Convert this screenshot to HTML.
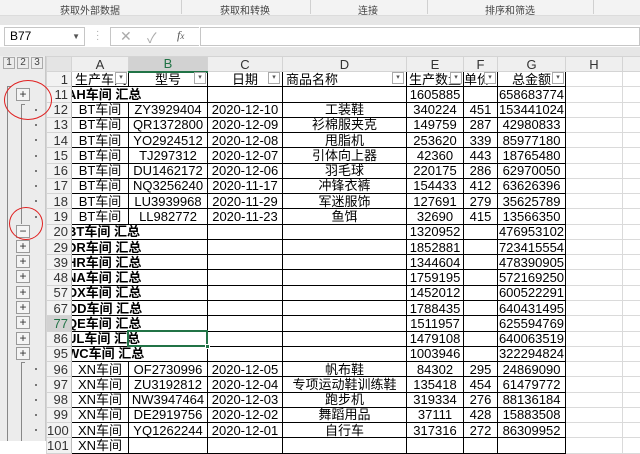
<!DOCTYPE html>
<html><head><meta charset="utf-8"><style>
*{margin:0;padding:0;box-sizing:border-box}
body{width:640px;height:441px;overflow:hidden;background:#fff;font-family:"Liberation Sans","Noto Sans CJK SC",sans-serif;font-size:13px;color:#000;position:relative}
.abs{position:absolute}
.rib{left:0;top:0;width:640px;height:16px;background:#f3f3f3;border-bottom:1px solid #dcdcdc;font-size:10px;color:#444}
.rib span{position:absolute;top:2px;transform:translateX(-50%)}
.sep{position:absolute;top:0;width:1px;height:14px;background:#d0d0d0}
.bar{left:0;top:16px;width:640px;height:9px;background:#e6e6e6}
.fbar{left:0;top:25px;width:640px;height:23px;background:#fff}
.bar2{left:0;top:47px;width:640px;height:9px;background:#e6e6e6}
.gut{left:0;top:56px;width:46px;height:385px;background:#ececec;border-right:1px solid #c8c8c8}
table{position:absolute;left:46px;top:56px;width:636px;border-collapse:collapse;table-layout:fixed}
td{height:15.27px;padding:0;line-height:13px;text-align:center;white-space:nowrap;overflow:hidden;border:1px solid #000}
tr.h td{height:15px;background:#efefef;border:1px solid #d4d4d4;color:#333;font-size:13px}
td.rh{background:#f2f2f2;border:1px solid #d4d4d4;border-right:1px solid #bbb;text-align:right;padding-right:3px;color:#333}
td.g{border:1px solid #dadada}
td.s{text-align:left;font-weight:bold;text-indent:-5px;border-right:none}
.flt{position:absolute;width:12px;height:12px;border:1px solid #aaa;background:#fff;font-size:7px;line-height:10px;text-align:center;color:#555}
.btn{position:absolute;left:16px;width:14px;height:13px;border:1px solid #999;background:#f4f4f4;font-size:12px;line-height:11px;text-align:center;color:#333}
.dot{position:absolute;left:35px;width:2px;height:2px;background:#777}
</style></head><body>
<div class="abs rib"><span style="left:90px">获取外部数据</span><div class="sep" style="left:181px"></div><span style="left:245px">获取和转换</span><div class="sep" style="left:310px"></div><span style="left:368px">连接</span><div class="sep" style="left:427px"></div><span style="left:510px">排序和筛选</span><div class="sep" style="left:593px"></div></div>
<div class="abs bar"></div>
<div class="abs fbar"></div>
<div class="abs" style="left:4px;top:27px;width:81px;height:19px;border:1px solid #c6c6c6;background:#fff;font-size:12px;line-height:17px;padding-left:5px">B77<span style="position:absolute;right:4px;top:0;font-size:8px;color:#555">▼</span></div>
<div class="abs" style="left:96px;top:30px;color:#aaa;font-size:10px;line-height:4px">·<br>·<br>·</div>
<div class="abs" style="left:110px;top:27px;width:89px;height:19px;border:1px solid #c6c6c6;border-right:none;background:#fff"></div>
<div class="abs" style="left:120px;top:28px;color:#aaa;font-size:14px">✕</div>
<div class="abs" style="left:147px;top:28px;color:#aaa;font-size:14px">✓</div>
<div class="abs" style="left:177px;top:28px;color:#555;font-size:12px;font-style:italic;font-family:'Liberation Serif',serif">f<span style="font-size:9px">x</span></div>
<div class="abs" style="left:200px;top:27px;width:440px;height:19px;border:1px solid #c6c6c6;background:#fff"></div>
<div class="abs bar2"></div>
<div class="abs gut"></div>
<div class="abs" style="left:3px;top:57px;width:12px;height:12px;border:1px solid #aaa;font-size:10px;line-height:10px;text-align:center;color:#444">1</div>
<div class="abs" style="left:17px;top:57px;width:12px;height:12px;border:1px solid #aaa;font-size:10px;line-height:10px;text-align:center;color:#444">2</div>
<div class="abs" style="left:31px;top:57px;width:12px;height:12px;border:1px solid #aaa;font-size:10px;line-height:10px;text-align:center;color:#444">3</div>
<table>
<colgroup><col style="width:25px"><col style="width:57px"><col style="width:79px"><col style="width:75px"><col style="width:124px"><col style="width:57px"><col style="width:34px"><col style="width:68px"><col style="width:57px"><col style="width:60px"></colgroup>
<tr class="h"><td style="background:#e4e4e4"></td><td>A</td><td style="background:#d2d2d2;color:#217346;border-bottom:2px solid #217346">B</td><td>C</td><td>D</td><td>E</td><td>F</td><td>G</td><td>H</td><td></td></tr>
<tr><td class="rh">1</td><td style="text-align:left;padding-left:3px">生产车间</td><td>型号</td><td>日期</td><td style="text-align:left;padding-left:3px">商品名称</td><td style="text-align:left;padding-left:2px">生产数量</td><td style="text-align:left">单价</td><td>总金额</td><td class="g"></td><td class="g"></td></tr>
<tr><td class="rh">11</td><td class="s" colspan="2">AH车间 汇总</td><td></td><td></td><td>1605885</td><td></td><td>658683774</td><td class="g"></td><td class="g"></td></tr>
<tr><td class="rh">12</td><td>BT车间</td><td>ZY3929404</td><td>2020-12-10</td><td>工装鞋</td><td>340224</td><td>451</td><td>153441024</td><td class="g"></td><td class="g"></td></tr>
<tr><td class="rh">13</td><td>BT车间</td><td>QR1372800</td><td>2020-12-09</td><td>衫棉服夹克</td><td>149759</td><td>287</td><td>42980833</td><td class="g"></td><td class="g"></td></tr>
<tr><td class="rh">14</td><td>BT车间</td><td>YO2924512</td><td>2020-12-08</td><td>甩脂机</td><td>253620</td><td>339</td><td>85977180</td><td class="g"></td><td class="g"></td></tr>
<tr><td class="rh">15</td><td>BT车间</td><td>TJ297312</td><td>2020-12-07</td><td>引体向上器</td><td>42360</td><td>443</td><td>18765480</td><td class="g"></td><td class="g"></td></tr>
<tr><td class="rh">16</td><td>BT车间</td><td>DU1462172</td><td>2020-12-06</td><td>羽毛球</td><td>220175</td><td>286</td><td>62970050</td><td class="g"></td><td class="g"></td></tr>
<tr><td class="rh">17</td><td>BT车间</td><td>NQ3256240</td><td>2020-11-17</td><td>冲锋衣裤</td><td>154433</td><td>412</td><td>63626396</td><td class="g"></td><td class="g"></td></tr>
<tr><td class="rh">18</td><td>BT车间</td><td>LU3939968</td><td>2020-11-29</td><td>军迷服饰</td><td>127691</td><td>279</td><td>35625789</td><td class="g"></td><td class="g"></td></tr>
<tr><td class="rh">19</td><td>BT车间</td><td>LL982772</td><td>2020-11-23</td><td>鱼饵</td><td>32690</td><td>415</td><td>13566350</td><td class="g"></td><td class="g"></td></tr>
<tr><td class="rh">20</td><td class="s" colspan="2">BT车间 汇总</td><td></td><td></td><td>1320952</td><td></td><td>476953102</td><td class="g"></td><td class="g"></td></tr>
<tr><td class="rh">29</td><td class="s" colspan="2">DR车间 汇总</td><td></td><td></td><td>1852881</td><td></td><td>723415554</td><td class="g"></td><td class="g"></td></tr>
<tr><td class="rh">39</td><td class="s" colspan="2">HR车间 汇总</td><td></td><td></td><td>1344604</td><td></td><td>478390905</td><td class="g"></td><td class="g"></td></tr>
<tr><td class="rh">48</td><td class="s" colspan="2">NA车间 汇总</td><td></td><td></td><td>1759195</td><td></td><td>572169250</td><td class="g"></td><td class="g"></td></tr>
<tr><td class="rh">57</td><td class="s" colspan="2">OX车间 汇总</td><td></td><td></td><td>1452012</td><td></td><td>600522291</td><td class="g"></td><td class="g"></td></tr>
<tr><td class="rh">67</td><td class="s" colspan="2">OD车间 汇总</td><td></td><td></td><td>1788435</td><td></td><td>640431495</td><td class="g"></td><td class="g"></td></tr>
<tr><td class="rh" style="background:#d2d2d2;color:#217346">77</td><td class="s" colspan="2">QE车间 汇总</td><td></td><td></td><td>1511957</td><td></td><td>625594769</td><td class="g"></td><td class="g"></td></tr>
<tr><td class="rh">86</td><td class="s" colspan="2">UL车间 汇总</td><td></td><td></td><td>1479108</td><td></td><td>640063519</td><td class="g"></td><td class="g"></td></tr>
<tr><td class="rh">95</td><td class="s" colspan="2">WC车间 汇总</td><td></td><td></td><td>1003946</td><td></td><td>322294824</td><td class="g"></td><td class="g"></td></tr>
<tr><td class="rh">96</td><td>XN车间</td><td>OF2730996</td><td>2020-12-05</td><td>帆布鞋</td><td>84302</td><td>295</td><td>24869090</td><td class="g"></td><td class="g"></td></tr>
<tr><td class="rh">97</td><td>XN车间</td><td>ZU3192812</td><td>2020-12-04</td><td>专项运动鞋训练鞋</td><td>135418</td><td>454</td><td>61479772</td><td class="g"></td><td class="g"></td></tr>
<tr><td class="rh">98</td><td>XN车间</td><td>NW3947464</td><td>2020-12-03</td><td>跑步机</td><td>319334</td><td>276</td><td>88136184</td><td class="g"></td><td class="g"></td></tr>
<tr><td class="rh">99</td><td>XN车间</td><td>DE2919756</td><td>2020-12-02</td><td>舞蹈用品</td><td>37111</td><td>428</td><td>15883508</td><td class="g"></td><td class="g"></td></tr>
<tr><td class="rh">100</td><td>XN车间</td><td>YQ1262244</td><td>2020-12-01</td><td>自行车</td><td>317316</td><td>272</td><td>86309952</td><td class="g"></td><td class="g"></td></tr>
<tr><td class="rh">101</td><td>XN车间</td><td></td><td></td><td></td><td></td><td></td><td></td><td class="g"></td><td class="g"></td></tr>
</table>
<div class="flt" style="left:115px;top:72px">▾</div>
<div class="flt" style="left:194px;top:72px">▾</div>
<div class="flt" style="left:268px;top:72px">▾</div>
<div class="flt" style="left:392px;top:72px">▾</div>
<div class="flt" style="left:450px;top:72px">▾</div>
<div class="flt" style="left:484px;top:72px">▾</div>
<div class="flt" style="left:552px;top:72px">▾</div>
<div class="abs" style="left:127px;top:330px;width:81px;height:17px;border:2px solid #217346"></div>
<div class="abs" style="left:205px;top:344px;width:5px;height:5px;background:#217346;border:1px solid #fff"></div>
<div class="abs" style="left:7px;top:86px;width:1px;height:355px;background:#888"></div>
<div class="abs" style="left:7px;top:86px;width:4px;height:1px;background:#888"></div>
<div class="abs" style="left:21px;top:104px;width:1px;height:120px;background:#888"></div>
<div class="abs" style="left:21px;top:104px;width:4px;height:1px;background:#888"></div>
<div class="abs" style="left:21px;top:362px;width:1px;height:79px;background:#888"></div>
<div class="abs" style="left:21px;top:362px;width:4px;height:1px;background:#888"></div>
<div class="btn" style="top:88px">+</div>
<div class="btn" style="top:225px">−</div>
<div class="btn" style="top:240px">+</div>
<div class="btn" style="top:255px">+</div>
<div class="btn" style="top:270px">+</div>
<div class="btn" style="top:286px">+</div>
<div class="btn" style="top:301px">+</div>
<div class="btn" style="top:316px">+</div>
<div class="btn" style="top:332px">+</div>
<div class="btn" style="top:347px">+</div>
<div class="dot" style="top:109px"></div><div class="dot" style="top:124px"></div><div class="dot" style="top:139px"></div><div class="dot" style="top:155px"></div><div class="dot" style="top:170px"></div><div class="dot" style="top:185px"></div><div class="dot" style="top:200px"></div><div class="dot" style="top:216px"></div>
<div class="dot" style="top:368px"></div><div class="dot" style="top:384px"></div><div class="dot" style="top:399px"></div><div class="dot" style="top:414px"></div><div class="dot" style="top:429px"></div>
<div class="abs" style="left:4px;top:80px;width:48px;height:40px;border:1.5px solid #e02020;border-radius:50%"></div>
<div class="abs" style="left:9px;top:207px;width:34px;height:33px;border:1.5px solid #e02020;border-radius:50%"></div>
</body></html>
